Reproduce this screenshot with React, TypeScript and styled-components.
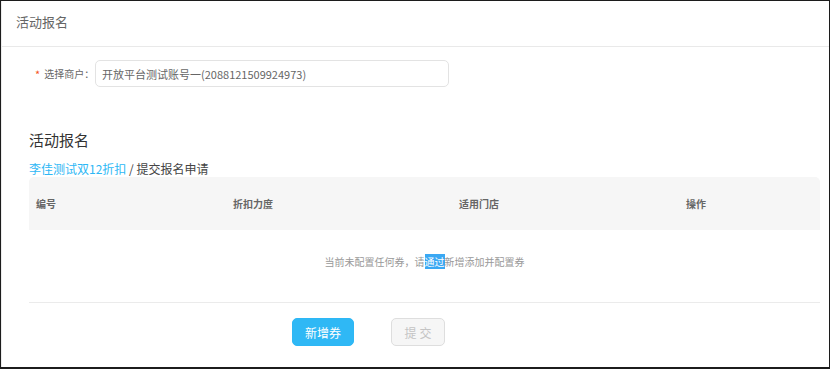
import styled, { createGlobalStyle } from "styled-components";

const GlobalStyle = createGlobalStyle`
    html, body {
        margin: 0;
        padding: 0;
        background: #fff;
    }
    body {
        font-family: "Noto Sans CJK SC", "Noto Sans", "Liberation Sans", sans-serif;
        color: #333;
    }
`;

const Frame = styled.div`
    box-sizing: border-box;
    width: 830px;
    height: 369px;
    border: 1px solid #1c1c1c;
    border-bottom-width: 2px;
    background: #fff;
    overflow: hidden;
`;

const Panel = styled.div`
    height: 100%;
    border-left: 1px solid #ececec;
`;

const PageHeader = styled.div`
    height: 45px;
    line-height: 42px;
    padding-left: 14px;
    font-size: 13px;
    color: #666;
    border-bottom: 1px solid #e9e9e9;
`;

const Body = styled.div`
    padding: 0 9px 0 26px;
`;

const FormRow = styled.div`
    display: flex;
    align-items: center;
    margin-top: 13px;
`;

const Label = styled.label`
    box-sizing: border-box;
    width: 65px;
    padding-left: 7px;
    font-size: 10px;
    color: #666;
    white-space: nowrap;
    display: flex;
    align-items: center;
`;

const Required = styled.span`
    color: #f5541e;
    font-size: 11px;
    margin-right: 4px;
`;

const Select = styled.div`
    box-sizing: border-box;
    width: 354px;
    height: 27px;
    margin-left: 2px;
    padding-left: 6px;
    border: 1px solid #e3e3e3;
    border-radius: 5px;
    font-size: 11px;
    color: #666;
    display: flex;
    align-items: center;
`;

const SectionTitle = styled.h2`
    margin: 43px 0 0 1px;
    font-size: 15px;
    font-weight: normal;
    line-height: 20px;
    color: #333;
`;

const Breadcrumb = styled.div`
    margin: 11px 0 0 1px;
    font-size: 12px;
    line-height: 16px;
    color: #444;
`;

const Crumb = styled.a`
    color: #2db7f5;
    text-decoration: none;
`;

const Table = styled.div`
    margin-left: 1px;
`;

const HeadRow = styled.div`
    display: grid;
    grid-template-columns: 197px 226px 227px 142px;
    height: 53px;
    align-items: center;
    background: #f6f6f6;
    border-radius: 5px 5px 0 0;
`;

const HeadCell = styled.div`
    padding-left: 7px;
    font-size: 10px;
    font-weight: bold;
    color: #666;
`;

const Empty = styled.div`
    padding: 24px 0 32px;
    line-height: 16px;
    font-size: 10px;
    color: #999;
    text-align: center;
    border-bottom: 1px solid #ebebeb;
`;

const Selected = styled.span`
    background: #3aa8f3;
    color: #fff;
`;

const Actions = styled.div`
    display: flex;
    gap: 37px;
    margin-top: 15px;
    padding-left: 264px;
`;

const Button = styled.button<{ $primary?: boolean }>`
    box-sizing: border-box;
    height: 28px;
    padding: 0;
    font-family: inherit;
    font-size: 12px;
    border-radius: 5px;
    border: 1px solid ${p => (p.$primary ? "#2db7f5" : "#dedede")};
    background: ${p => (p.$primary ? "#2fb8f5" : "#f6f6f6")};
    color: ${p => (p.$primary ? "#fff" : "#c4c4c4")};
    width: ${p => (p.$primary ? "62px" : "54px")};
    letter-spacing: ${p => (p.$primary ? "0" : "3px")};
    text-indent: ${p => (p.$primary ? "0" : "3px")};
`;

const columns = ["编号", "折扣力度", "适用门店", "操作"];

const App = () => {
    return (
        <>
            <GlobalStyle />
            <Frame>
                <Panel>
                    <PageHeader>活动报名</PageHeader>
                    <Body>
                        <FormRow>
                            <Label>
                                <Required>*</Required>
                                选择商户：
                            </Label>
                            <Select>开放平台测试账号一(2088121509924973)</Select>
                        </FormRow>
                        <SectionTitle>活动报名</SectionTitle>
                        <Breadcrumb>
                            <Crumb>李佳测试双12折扣</Crumb> / 提交报名申请
                        </Breadcrumb>
                        <Table>
                            <HeadRow>
                                {columns.map(c => (
                                    <HeadCell key={c}>{c}</HeadCell>
                                ))}
                            </HeadRow>
                            <Empty>
                                当前未配置任何券，请<Selected>通过</Selected>新增添加并配置券
                            </Empty>
                        </Table>
                        <Actions>
                            <Button $primary>新增券</Button>
                            <Button disabled>提交</Button>
                        </Actions>
                    </Body>
                </Panel>
            </Frame>
        </>
    );
};

export default App;
